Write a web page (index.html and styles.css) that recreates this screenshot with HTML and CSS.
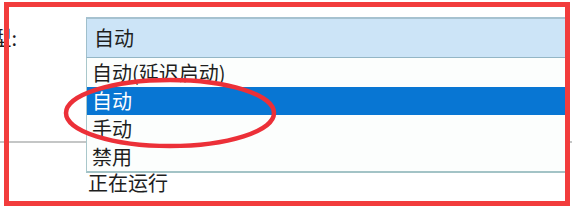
FILE: index.html
```html
<!DOCTYPE html>
<html lang="zh-CN">
<head>
<meta charset="utf-8">
<title>启动类型</title>
<link rel="stylesheet" href="styles.css">
</head>
<body>
<div class="page">
  <div class="row">
    <div class="label"><span>启动类型:</span></div>
    <div class="combo">
      <div class="combo-head">自动</div>
      <ul class="list">
        <li class="item first">自动(延迟启动)</li>
        <li class="item selected">自动</li>
        <li class="item">手动</li>
        <li class="item">禁用</li>
      </ul>
    </div>
  </div>
  <div class="sep"></div>
  <div class="row status-row">
    <div class="label"></div>
    <div class="status">正在运行</div>
  </div>
  <svg class="circle" width="572" height="208" viewBox="0 0 572 208">
    <ellipse cx="170" cy="113" rx="104" ry="33" fill="none" stroke="#ec3038" stroke-width="4.5"/>
  </svg>
  <div class="frame"></div>
</div>
</body>
</html>
```
FILE: styles.css
```css
* { box-sizing: border-box; }
html, body { margin: 0; padding: 0; background: #ffffff; }
body {
  font-family: "Noto Sans CJK SC", "Noto Sans", sans-serif;
  font-size: 20px;
  color: #1e1e1e;
}
.page {
  position: relative;
  width: 572px;
  height: 208px;
  overflow: hidden;
  padding-top: 17px;
}
.row {
  display: flex;
  align-items: center;
}
.label {
  width: 17px;
  margin-right: 69px;
  display: flex;
  justify-content: flex-end;
  overflow: hidden;
  white-space: nowrap;
  line-height: 20px;
  min-height: 20px;
}
.label span { flex: none; }
.combo {
  position: relative;
  width: 479px;
}
.combo-head {
  height: 41px;
  background: #cce4f7;
  border-top: 2px solid #a6c2d0;
  border-left: 1px solid #9fbfcc;
  border-bottom: 1px solid #93b6c6;
  padding-left: 7px;
  line-height: 38px;
}
.list {
  position: absolute;
  top: 41px;
  left: 0;
  right: 0;
  margin: 0;
  padding: 0;
  list-style: none;
  background: #fcfefd;
  border-left: 1px solid #a9c7cb;
  border-bottom: 2px solid #a3c3c6;
}
.item {
  height: 28px;
  line-height: 28px;
  padding-left: 5px;
}
.item.first { height: 29px; line-height: 29px; }
.item.selected {
  background: #0876d3;
  color: #ffffff;
}
.sep {
  margin-top: 83px;
  height: 2px;
  background: #c4c6c6;
}
.status-row { margin-top: 30px; }
.status {
  margin-left: 2px;
  line-height: 20px;
}
.circle {
  position: absolute;
  left: 0;
  top: 0;
}
.frame {
  position: absolute;
  left: 4px;
  top: 2px;
  width: 566px;
  height: 204px;
  border: 5px solid #f23c3c;
}
```
